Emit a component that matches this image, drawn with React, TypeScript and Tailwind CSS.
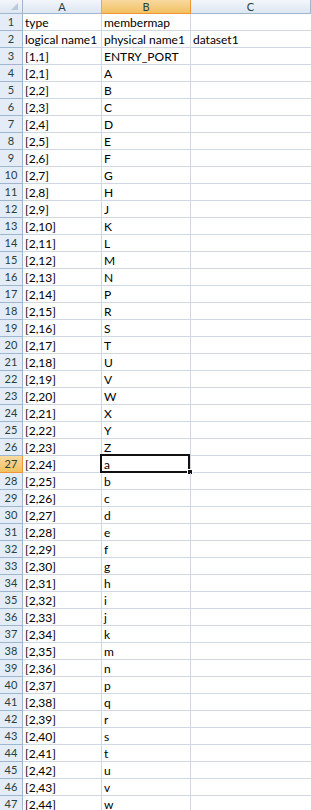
const upper = "ABCDEFGHJKLMNPRSTUVWXYZ".split("")
const lower = "abcdefghijkmnpqrstuvw".split("")

const rows: string[][] = [
  ["type", "membermap", ""],
  ["logical name1", "physical name1", "dataset1"],
  ["[1,1]", "ENTRY_PORT", ""],
  ...[...upper, ...lower].map((ch, i) => [`[2,${i + 1}]`, ch, ""]),
]

const ACTIVE_ROW = 27

function ColHeader({ label, active }: { label: string; active?: boolean }) {
  return (
    <div
      className={
        active
          ? "h-[14px] border-r border-b border-[#f29536] bg-gradient-to-b from-[#f9d99f] to-[#f1c15f] text-center text-[11px] leading-[13px] text-[#27413e]"
          : "h-[14px] border-r border-b border-[#9eb6ce] bg-gradient-to-b from-[#f3f6fb] to-[#dde6f2] text-center text-[11px] leading-[13px] text-[#27413e]"
      }
    >
      {label}
    </div>
  )
}

export default function App() {
  return (
    <div
      className="w-[311px] h-[810px] overflow-hidden bg-white"
      style={{ fontFamily: "Lato, 'Liberation Sans', sans-serif" }}
    >
      <div className="grid grid-cols-[23px_79px_89px_1fr]">
        <div className="relative h-[14px] border-r border-b border-[#9eb6ce] bg-gradient-to-b from-[#f3f6fb] to-[#dde6f2]">
          <div className="absolute right-[4px] bottom-[3px] w-0 h-0 border-l-[7px] border-l-transparent border-b-[7px] border-b-[#b8c9dc]" />
        </div>
        <ColHeader label="A" />
        <ColHeader label="B" active />
        <ColHeader label="C" />

        {rows.map((r, i) => {
          const n = i + 1
          const active = n === ACTIVE_ROW
          return (
            <div key={n} className="contents">
              <div
                className={
                  active
                    ? "h-[17px] border-r border-b border-[#f29536] bg-gradient-to-b from-[#f9d99f] to-[#f1c15f] text-center text-[11px] leading-[16px] text-[#27413e]"
                    : "h-[17px] border-r border-b border-[#9eb6ce] bg-[#e4ecf7] text-center text-[11px] leading-[16px] text-[#27413e]"
                }
              >
                {n}
              </div>
              <div className="h-[17px] border-r border-b border-[#d0d7e5] pl-[2px] text-[12px] leading-[17px] text-black whitespace-nowrap">
                {r[0]}
              </div>
              <div className="relative h-[17px] border-r border-b border-[#d0d7e5] pl-[2px] text-[12px] leading-[17px] text-black whitespace-nowrap">
                {r[1]}
                {active && (
                  <>
                    <div className="absolute -left-[2px] -top-[2px] w-[90px] h-[19px] border-2 border-[#111]" />
                    <div className="absolute right-[-3px] bottom-[-3px] w-[6px] h-[6px] bg-[#111] border border-white" />
                  </>
                )}
              </div>
              <div className="h-[17px] border-b border-[#d0d7e5] pl-[2px] text-[12px] leading-[17px] text-black whitespace-nowrap">
                {r[2]}
              </div>
            </div>
          )
        })}
      </div>
    </div>
  )
}
